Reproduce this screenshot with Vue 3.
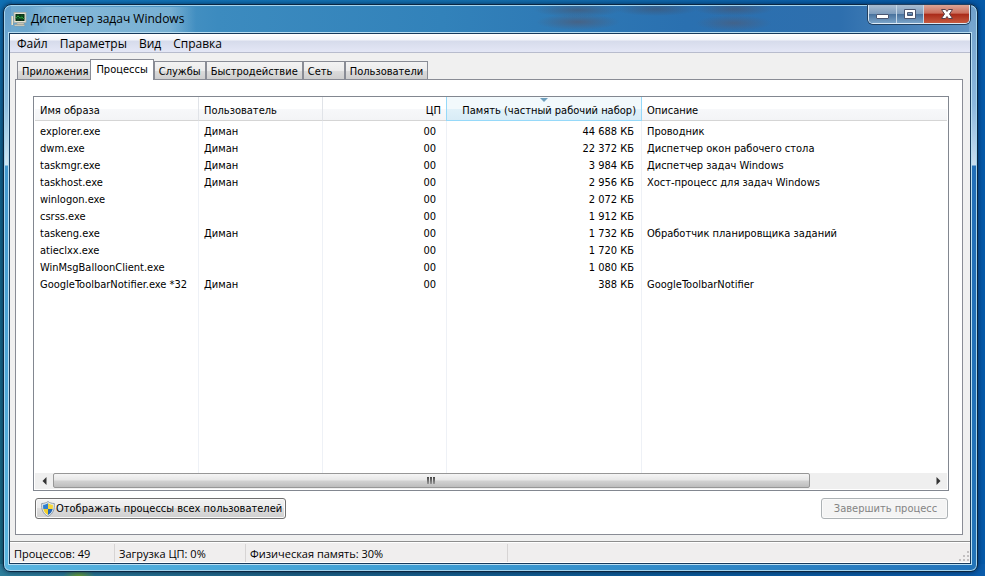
<script setup>
const menu = ['Файл', 'Параметры', 'Вид', 'Справка']
const tabs = [
  { name: 'Приложения' },
  { name: 'Процессы', active: true },
  { name: 'Службы' },
  { name: 'Быстродействие' },
  { name: 'Сеть' },
  { name: 'Пользователи' }
]
const processes = [
  { name: 'explorer.exe', user: 'Диман', mem: '44 688 КБ', desc: 'Проводник' },
  { name: 'dwm.exe', user: 'Диман', mem: '22 372 КБ', desc: 'Диспетчер окон рабочего стола' },
  { name: 'taskmgr.exe', user: 'Диман', mem: '3 984 КБ', desc: 'Диспетчер задач Windows' },
  { name: 'taskhost.exe', user: 'Диман', mem: '2 956 КБ', desc: 'Хост-процесс для задач Windows' },
  { name: 'winlogon.exe', user: '', mem: '2 072 КБ', desc: '' },
  { name: 'csrss.exe', user: '', mem: '1 912 КБ', desc: '' },
  { name: 'taskeng.exe', user: 'Диман', mem: '1 732 КБ', desc: 'Обработчик планировщика заданий' },
  { name: 'atieclxx.exe', user: '', mem: '1 720 КБ', desc: '' },
  { name: 'WinMsgBalloonClient.exe', user: '', mem: '1 080 КБ', desc: '' },
  { name: 'GoogleToolbarNotifier.exe *32', user: 'Диман', mem: '388 КБ', desc: 'GoogleToolbarNotifier' }
]
</script>

<template>
  <div class="desktop">
    <section class="window">
      <header class="titlebar">
        <svg class="app-icon" width="16" height="16" viewBox="0 0 16 16" aria-hidden="true">
          <path d="M1 5v9" stroke="#e8e6d0" stroke-width="2" />
          <path d="M0.5 5v9M2.5 5v9" stroke="#8a9494" stroke-width="0.5" />
          <rect x="3" y="1.5" width="12" height="10" fill="#e6e4d6" stroke="#a8aca4" stroke-width="0.8" />
          <rect x="4.5" y="3" width="9" height="7" fill="#092d16" />
          <path d="M4.500 5h9M4.500 7.500h9M7 3v7M11 3v7" stroke="#146528" stroke-width="0.6" />
          <path d="M5 7l2-2 2 2 2-1 2 2" fill="none" stroke="#2da940" stroke-width="0.9" />
          <path d="M6 12h7v1.500H6zM4 13.500h9l1 1.500H3z" fill="#d6d4c4" stroke="#8f938c" stroke-width="0.4" />
        </svg>
        <h1 class="title">Диспетчер задач Windows</h1>
        <div class="caption">
          <button class="cap min" type="button" aria-label="Свернуть">
            <svg width="13" height="12" viewBox="0 0 13 12"><rect x="0.500" y="6.500" width="12" height="4" rx="0.500" fill="#fff" stroke="#4a5670" /></svg>
          </button>
          <button class="cap max" type="button" aria-label="Развернуть">
            <svg width="12" height="12" viewBox="0 0 12 12"><path d="M0.500 1.500h11v9H0.500zM3.500 4.500v3h5v-3z" fill="#fff" fill-rule="evenodd" stroke="#4a5670" /></svg>
          </button>
          <button class="cap close" type="button" aria-label="Закрыть">
            <svg width="14" height="12" viewBox="0 0 14 12"><path d="M1.500 1.500h4L7 3.500l1.500-2h4L9.500 6l3 4.500h-4L7 8.500l-1.500 2h-4L4.500 6z" fill="#fff" stroke="#5a4048" /></svg>
          </button>
        </div>
      </header>

      <div class="client">
        <nav class="menu">
          <a v-for="m in menu" :key="m" href="#">{{ m }}</a>
        </nav>

        <main class="body">
          <div class="tabs" role="tablist">
            <button
              v-for="t in tabs"
              :key="t.name"
              class="tab"
              :class="{ active: t.active }"
              type="button"
              role="tab"
              :aria-selected="!!t.active"
            >{{ t.name }}</button>
          </div>

          <div class="panel">
            <div class="list">
              <div class="rows">
                <table>
                  <colgroup>
                    <col class="c-name" /><col class="c-user" /><col class="c-cpu" /><col class="c-mem" /><col />
                  </colgroup>
                  <thead>
                    <tr>
                      <th>Имя образа</th>
                      <th>Пользователь</th>
                      <th class="num">ЦП</th>
                      <th class="num sorted">
                        <svg class="arrow" width="8" height="4" viewBox="0 0 8 4" aria-hidden="true"><path d="M0 0h8L4 4z" fill="#6d9fbd" /></svg>
                        Память (частный рабочий набор)
                      </th>
                      <th>Описание</th>
                    </tr>
                  </thead>
                  <tbody>
                    <tr v-for="p in processes" :key="p.name">
                      <td>{{ p.name }}</td>
                      <td>{{ p.user }}</td>
                      <td class="num">00</td>
                      <td class="num">{{ p.mem }}</td>
                      <td>{{ p.desc }}</td>
                    </tr>
                    <tr class="filler"><td /><td /><td /><td /><td /></tr>
                  </tbody>
                </table>
              </div>
              <div class="scroll">
                <button type="button" class="step" aria-label="Влево">
                  <svg width="5" height="8" viewBox="0 0 5 8"><path d="M4.500 0v8L0.500 4z" fill="#333" /></svg>
                </button>
                <div class="track">
                  <div class="thumb"><i /><i /><i /></div>
                </div>
                <button type="button" class="step" aria-label="Вправо">
                  <svg width="5" height="8" viewBox="0 0 5 8"><path d="M0.500 0v8l4-4z" fill="#333" /></svg>
                </button>
              </div>
            </div>

            <div class="actions">
              <button class="btn" type="button">
                <svg width="14" height="16" viewBox="0 0 14 16" aria-hidden="true">
                  <path d="M7 0.500C5.500 1.800 3 2.500 0.700 2.500 0.300 8 1.500 12.500 7 15.500c5.500-3 6.700-7.500 6.300-13C11 2.500 8.500 1.800 7 0.500z" fill="#e4ebf0" stroke="#7d8b98" stroke-width="0.8" />
                  <path d="M7 2.200C5.700 3.100 4 3.700 2.200 3.800 2 5.300 2 6.700 2.300 8H7z" fill="#2f7fd0" />
                  <path d="M7 2.200c1.300.9 3 1.500 4.800 1.600.2 1.500.2 2.900-.1 4.200H7z" fill="#f5d73a" />
                  <path d="M2.300 8c.6 2.600 2 4.500 4.700 6V8z" fill="#f2cf2e" />
                  <path d="M11.700 8c-.6 2.600-2 4.500-4.700 6V8z" fill="#2468b8" />
                </svg>
                Отображать процессы всех пользователей
              </button>
              <button class="btn end" type="button" disabled>Завершить процесс</button>
            </div>
          </div>
        </main>

        <footer class="status">
          <span class="s1">Процессов: 49</span>
          <span class="s2">Загрузка ЦП: 0%</span>
          <span class="s3">Физическая память: 30%</span>
          <svg class="grip" width="11" height="11" viewBox="0 0 11 11" aria-hidden="true">
            <path d="M8 0h2v2H8zM8 4h2v2H8zM8 8h2v2H8zM4 4h2v2H4zM4 8h2v2H4zM0 8h2v2H0z" fill="#c2bfc0" />
          </svg>
        </footer>
      </div>
    </section>
  </div>
</template>

<style>
body {
  margin: 0;
}
</style>

<style scoped>
* {
  box-sizing: border-box;
}
button {
  font: inherit;
  color: inherit;
  margin: 0;
}
.desktop {
  display: flex;
  height: 100vh;
  padding: 4px 7px 4px 3px;
  background:
    radial-gradient(ellipse 16px 8px at 8% 100%, rgba(110, 160, 40, 0.9), rgba(110, 160, 40, 0)),
    linear-gradient(90deg, #2e7f9c 0, #1d6286 30%, #0a5c9c 70%, #0a5cab) bottom / 100% 12px no-repeat,
    linear-gradient(180deg, #1070b4, #12648c 30%, #1b6f86) left / 12px 100% no-repeat,
    linear-gradient(90deg, #0f76bc, #1470ae 50%, #0559a8);
  font: 11px/14px "DejaVu Sans Condensed", "Noto Sans", sans-serif;
  color: #000;
}
.window {
  flex: 1;
  min-width: 0;
  display: flex;
  flex-direction: column;
  padding: 0 7px 8px 6px;
  border: 1px solid #0b2742;
  border-radius: 8px 8px 7px 7px;
  box-shadow: inset 0 0 0 1px #a5d4ee, 0 0 5px rgba(0, 15, 45, 0.7);
  background:
    radial-gradient(ellipse 44px 7px at 59% 5px, rgba(75, 80, 100, 0.55), rgba(75, 80, 100, 0)),
    radial-gradient(ellipse 42px 8px at 59% 17px, rgba(80, 90, 115, 0.7), rgba(80, 90, 115, 0)),
    radial-gradient(ellipse 42px 7px at 67% 4px, rgba(70, 75, 95, 0.5), rgba(70, 75, 95, 0)),
    radial-gradient(ellipse 40px 7px at 75% 4px, rgba(75, 80, 100, 0.55), rgba(75, 80, 100, 0)),
    radial-gradient(ellipse 38px 8px at 75% 18px, rgba(80, 90, 115, 0.6), rgba(80, 90, 115, 0)),
    linear-gradient(180deg, #5f9cca 0, #8dbfe0 100px, #d0e6f2 160px, #4499cf 161px, #5ab6e0) left / 7px 100% no-repeat,
    linear-gradient(180deg, #6f9fca 0, #8db8de 100px, #c9def0 160px, #226fb8 161px, #2374b8) right / 8px 100% no-repeat,
    linear-gradient(90deg, #58b4e0, #3f9fd4 40%, #2374bb) bottom / 100% 9px no-repeat,
    linear-gradient(90deg, #6fa9cf 0, #3c8bbf 22%, #3282ba 45%, #2a70b0 70%, #2e6fae 86%, #6495c4);
}
.titlebar {
  display: flex;
  flex: none;
  height: 29px;
  padding-left: 1px;
}
.app-icon {
  flex: none;
  margin-top: 6px;
}
.title {
  margin: 2px 0 1px;
  padding: 3px 12px 3px 4px;
  font: 12px/18px "Open Sans", "Noto Sans", sans-serif;
  background: linear-gradient(90deg, rgba(150, 195, 222, 0), rgba(150, 195, 222, 0.7) 12%, rgba(150, 195, 222, 0.6) 85%, rgba(150, 195, 222, 0));
  white-space: nowrap;
}
.caption {
  display: flex;
  height: 19px;
  margin-left: auto;
  border: 1px solid #dcebf7;
  border-top: 0;
  border-radius: 0 0 5px 5px;
  overflow: hidden;
  box-shadow: 0 0 0 1px #23405f;
}
.cap {
  display: grid;
  place-items: center;
  padding: 0;
  border: 0;
  border-right: 1px solid #c4d6e6;
  background: linear-gradient(#a9bdd2, #7f9dbd 48%, #47719c 50%, #7aa3c8);
}
.min {
  width: 28px;
}
.max {
  width: 27px;
}
.close {
  width: 45px;
  border-right: 0;
  background: linear-gradient(#dca596, #cb6e5c 46%, #a92a18 50%, #c65a40);
}
.client {
  flex: 1;
  min-height: 0;
  display: flex;
  flex-direction: column;
  background: #f0f0f0;
  box-shadow: 0 0 0 1px #173a5c, 0 0 0 2px #b9def2;
}
.menu {
  display: flex;
  flex: none;
  height: 19px;
  padding: 0 7px;
  gap: 12px;
  border-bottom: 1px solid #b8bccd;
  background: linear-gradient(#fff, #f2f4fa 6px, #d6dbeb 7px, #e4e7f6);
  font: 12px/19px "Open Sans", "Noto Sans", sans-serif;
}
.menu a {
  color: #000;
  text-decoration: none;
}
.body {
  flex: 1;
  min-height: 0;
  display: flex;
  flex-direction: column;
  padding: 6px 7px 6px 5px;
}
.tabs {
  display: flex;
  flex: none;
  align-items: flex-end;
  padding-left: 2px;
}
.tab {
  height: 18px;
  min-width: 42px;
  padding: 2px 4px 0;
  border: 1px solid #898c95;
  border-bottom: 0;
  background: linear-gradient(#f3f3f3, #ebebeb 50%, #dcdcdc 51%, #cecece);
  text-align: left;
  white-space: nowrap;
}
.tab.active {
  z-index: 1;
  height: 21px;
  padding: 0 5px;
  margin: 0 0 -1px -3px;
  background: #fff;
  text-align: center;
}
.panel {
  flex: 1;
  min-height: 0;
  display: flex;
  flex-direction: column;
  padding: 16px 13px 15px 17px;
  border: 1px solid #898c95;
  background: #fff;
}
.list {
  flex: 1;
  min-height: 0;
  display: flex;
  flex-direction: column;
  border: 1px solid #828790;
  padding: 0 1px 1px;
}
.rows {
  flex: 1;
  min-height: 0;
  display: flex;
}
table {
  width: 100%;
  table-layout: fixed;
  border-collapse: separate;
  border-spacing: 0;
}
.c-name {
  width: 164px;
}
.c-user,
.c-cpu {
  width: 124px;
}
.c-mem {
  width: 195px;
}
th {
  position: relative;
  height: 24px;
  padding: 4px 5px 0;
  border-right: 1px solid #e0e3e8;
  border-bottom: 1px solid #d5d5d5;
  background: linear-gradient(#fff 50%, #f7f8fa 51%, #f3f4f6);
  font-weight: 400;
  text-align: left;
  white-space: nowrap;
}
td {
  height: 17px;
  padding: 0 5px;
  border-right: 1px solid #eef1f6;
  white-space: nowrap;
}
th:last-child,
td:last-child {
  border-right: 0;
}
.num {
  text-align: right;
}
td.num {
  padding-right: 7px;
}
td.num:nth-child(3) {
  padding-right: 10px;
}
.sorted {
  border-color: #96d9f9;
  box-shadow: -1px 0 0 #96d9f9;
  background: linear-gradient(#f2f9fc 50%, #e1f1f9 51%, #d8ecf6);
}
.arrow {
  position: absolute;
  top: 1px;
  left: calc(50% - 4px);
}
.filler td {
  height: auto;
}
tbody tr:first-child td {
  height: 19px;
  padding-top: 2px;
}
.scroll {
  flex: none;
  display: flex;
  height: 16px;
  background: #efefef;
}
.step {
  display: grid;
  place-items: center;
  width: 18px;
  padding: 0;
  border: 0;
  background: none;
}
.track {
  flex: 1;
}
.thumb {
  display: flex;
  justify-content: center;
  align-items: center;
  gap: 1px;
  width: 86.4%;
  height: 15px;
  border: 1px solid #979797;
  border-radius: 2px;
  background: linear-gradient(#f5f5f5, #e6e6e6 48%, #d2d2d2 52%, #bdbdbd);
}
.thumb i {
  width: 2px;
  height: 7px;
  background: linear-gradient(#444, #999);
}
.actions {
  flex: none;
  display: flex;
  justify-content: space-between;
  padding: 7px 1px 0 2px;
}
.btn {
  display: flex;
  align-items: center;
  height: 21px;
  padding: 0 3px 0 5px;
  gap: 1px;
  border: 1px solid #707070;
  border-radius: 3px;
  background: linear-gradient(#f2f2f2, #ebebeb 48%, #dddddd 50%, #cfcfcf);
  box-shadow: inset 0 0 0 1px #fafafa;
  white-space: nowrap;
}
.end {
  justify-content: center;
  width: 127px;
  border-color: #adb2b5;
  background: #f4f4f4;
  color: #838383;
}
.status {
  flex: none;
  display: flex;
  height: 22px;
  padding: 2px 0 1px;
  border-top: 1px solid #8d8d8d;
  background: #f0eeee;
  box-shadow: inset 0 1px 0 #fff, inset 0 -1px 0 #fff;
  font: 11px/20px "Open Sans", "Noto Sans", sans-serif;
}
.status span {
  padding-left: 4px;
  border-right: 1px solid #d7d4d4;
  white-space: nowrap;
}
.s1 {
  width: 105px;
}
.s2 {
  width: 131px;
}
.s3 {
  width: 262px;
}
.grip {
  margin: auto 0 0 auto;
}
</style>
